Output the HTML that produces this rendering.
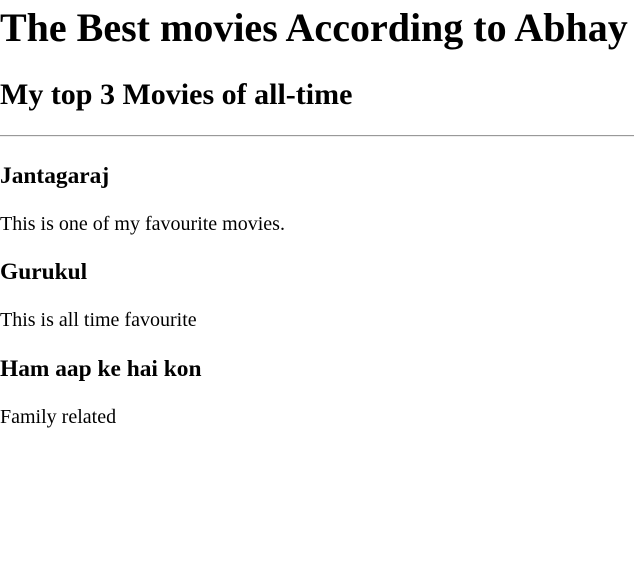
<!DOCTYPE html>
<html><head><style>
body{margin:0;width:634px;height:583px;background:#fff;font-family:"Liberation Serif",serif;color:#000;position:relative;overflow:hidden}
div{position:absolute;left:0;line-height:1;white-space:nowrap}
.h1{font-size:40px;font-weight:bold;top:7.5px}
.h2{font-size:30px;font-weight:bold;top:80px}
.h3{font-size:23.4px;font-weight:bold}
.p{font-size:20px}
.hr{top:135px;width:634px;height:0;border-top:1px solid #999;border-bottom:1px solid #eee}
</style></head><body>
<div class="h1">The Best movies According to Abhay</div>
<div class="h2">My top 3 Movies of all-time</div>
<div class="hr"></div>
<div class="h3" style="top:165px">Jantagaraj</div>
<div class="p" style="top:213.5px">This is one of my favourite movies.</div>
<div class="h3" style="top:261px">Gurukul</div>
<div class="p" style="top:310px">This is all time favourite</div>
<div class="h3" style="top:358px">Ham aap ke hai kon</div>
<div class="p" style="top:406.5px">Family related</div>
</body></html>
